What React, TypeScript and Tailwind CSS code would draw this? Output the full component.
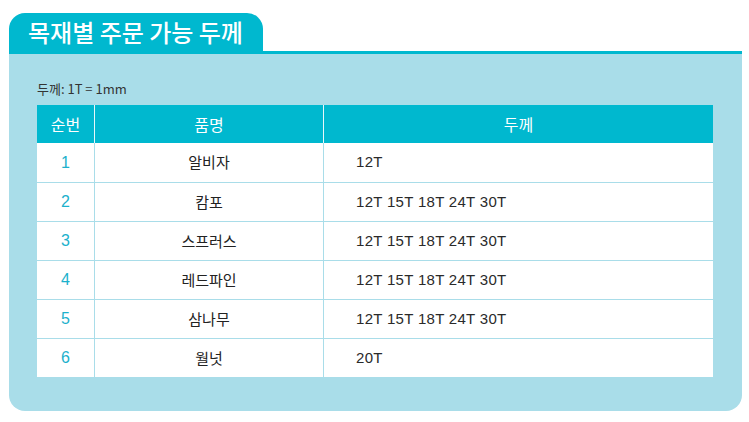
import React from "react";

const rows: [string, string, string][] = [
  ["1", "알비자", "12T"],
  ["2", "캄포", "12T 15T 18T 24T 30T"],
  ["3", "스프러스", "12T 15T 18T 24T 30T"],
  ["4", "레드파인", "12T 15T 18T 24T 30T"],
  ["5", "삼나무", "12T 15T 18T 24T 30T"],
  ["6", "월넛", "20T"],
];

const ko = { fontFamily: '"Noto Sans CJK KR", "Noto Sans", sans-serif' };
const num = { fontFamily: '"Liberation Sans", "Noto Sans CJK KR", sans-serif' };

export default function App() {
  return (
    <div className="w-[749px] h-[422px] bg-white pt-[13px] pl-[9px]">
      <div className="w-[733px]">
        <div className="flex">
          <div
            className="w-[254px] h-[38px] bg-[#00b8cf] rounded-t-[16px] text-white text-[24px] font-medium leading-[37px] pl-[19px]"
            style={ko}
          >
            목재별 주문 가능 두께
          </div>
        </div>
        <div className="h-[3px] bg-[#00b8cf]" />
        <div className="bg-[#a9dde9] rounded-b-[16px] pt-[25px] pl-[28px] pr-[29px] pb-[34px]">
          <div className="text-[13px] leading-[20px] text-[#333] mb-[6px]" style={ko}>
            두께: 1T = 1mm
          </div>
          <div className="bg-white w-[676px]">
            <div className="flex h-[38px] bg-[#00b8cf] text-white text-[16px]" style={ko}>
              <div className="w-[58px] flex items-center justify-center border-r border-[#e8f7fa]">순번</div>
              <div className="w-[229px] flex items-center justify-center border-r border-[#e8f7fa]">품명</div>
              <div className="flex-1 flex items-center justify-center">두께</div>
            </div>
            {rows.map((r, i) => (
              <div
                key={r[0]}
                className={`flex h-[39px] ${i > 0 ? "border-t border-[#a9dde9]" : ""}`}
              >
                <div
                  className="w-[58px] flex items-center justify-center border-r border-[#a9dde9] text-[#1cb1cc] text-[16px]"
                  style={num}
                >
                  {r[0]}
                </div>
                <div
                  className="w-[229px] flex items-center justify-center border-r border-[#a9dde9] text-[#222] text-[15px]"
                  style={ko}
                >
                  {r[1]}
                </div>
                <div
                  className="flex-1 flex items-center pl-[32px] text-[#2a2a2a] text-[15px] tracking-[0.3px]"
                  style={num}
                >
                  {r[2]}
                </div>
              </div>
            ))}
          </div>
        </div>
      </div>
    </div>
  );
}
